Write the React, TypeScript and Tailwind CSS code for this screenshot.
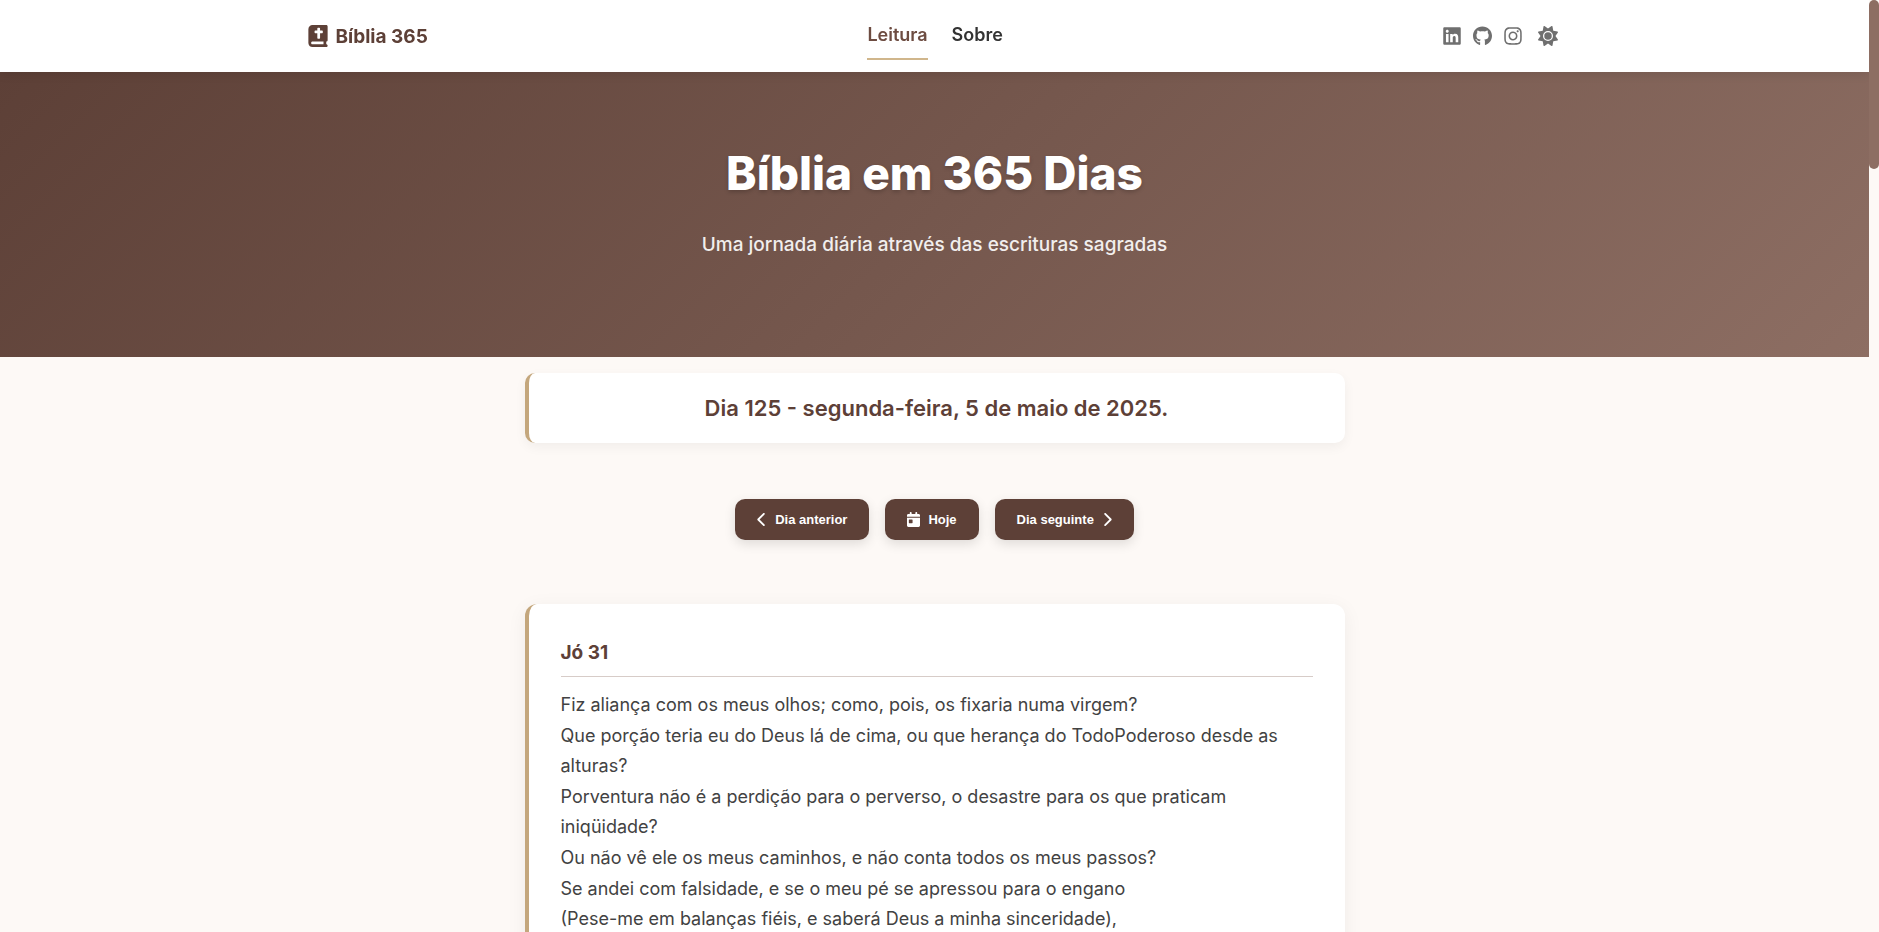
import { FaBookBible, FaCalendarDay, FaChevronLeft, FaChevronRight, FaGithub, FaInstagram, FaLinkedin, FaSun } from "react-icons/fa6";

const verses = [
  "Fiz aliança com os meus olhos; como, pois, os fixaria numa virgem?",
  "Que porção teria eu do Deus lá de cima, ou que herança do TodoPoderoso desde as alturas?",
  "Porventura não é a perdição para o perverso, o desastre para os que praticam iniqüidade?",
  "Ou não vê ele os meus caminhos, e não conta todos os meus passos?",
  "Se andei com falsidade, e se o meu pé se apressou para o engano",
  "(Pese-me em balanças fiéis, e saberá Deus a minha sinceridade),",
];

const dayButton =
  "flex h-[41px] cursor-pointer items-center gap-2 rounded-[10px] bg-[#5d4037] px-[22px] font-['Liberation_Sans',Arial,sans-serif] text-[13px] font-bold text-white shadow-[0_4px_12px_rgba(0,0,0,0.12)]";

function Header() {
  return (
    <header className="sticky top-0 z-10 bg-white shadow-[0_2px_10px_rgba(0,0,0,0.1)]">
      <div className="mx-auto flex h-[72px] max-w-[1302px] items-center justify-between px-6">
        <a href="#inicio" className="flex items-center gap-2 text-[19px] leading-8 font-bold text-[#5d4037]">
          <FaBookBible className="h-[22px] w-5" />
          <span className="pt-0.5">Bíblia 365</span>
        </a>
        <nav className="flex gap-6 text-[18px] leading-[26px] font-semibold">
          <a href="#leitura" className="border-b-2 border-[#d0b68c] py-2.5 text-[#6d4c41]">
            Leitura
          </a>
          <a href="#sobre" className="border-b-2 border-transparent py-2.5 text-[#333333]">
            Sobre
          </a>
        </nav>
        <div className="flex items-center gap-3 pr-1 text-[#6f6f6f]">
          <a href="#linkedin" aria-label="LinkedIn"><FaLinkedin className="h-5 w-[18px]" /></a>
          <a href="#github" aria-label="GitHub"><FaGithub className="h-5 w-[19px]" /></a>
          <a href="#instagram" aria-label="Instagram"><FaInstagram className="h-5 w-[18px]" /></a>
          <button type="button" aria-label="Alternar tema" className="ml-1 cursor-pointer"><FaSun className="h-5 w-5" /></button>
        </div>
      </div>
    </header>
  );
}

export default function App() {
  return (
    <div className="flex h-screen bg-[#fdf9f6] font-[Inter,sans-serif]">
      <div className="min-w-0 flex-1 overflow-y-auto [scrollbar-width:none]">
        <Header />
        <section className="bg-linear-[135deg] from-[#5d4037] to-[#8d6e63] px-6 pt-16 pb-24 text-center text-white">
          <h1 className="text-[46px] leading-[74px] font-extrabold [text-shadow:0_2px_4px_rgba(0,0,0,0.2)]">
            Bíblia em 365 Dias
          </h1>
          <p className="mt-[18px] text-[19px] leading-[33px] font-medium opacity-90">Uma jornada diária através das escrituras sagradas</p>
        </section>
        <main className="mx-auto max-w-[820px] pt-4 pb-16">
          <h2 className="rounded-[10px] border-l-4 border-[#c4a77d] bg-white py-4 text-center text-[22px] leading-[38px] font-semibold text-[#5d4037] shadow-[0_4px_12px_rgba(0,0,0,0.05)]">
            Dia 125 - segunda-feira, 5 de maio de 2025.
          </h2>
          <div className="mt-14 flex flex-wrap justify-center gap-4">
            <button type="button" className={dayButton}>
              <FaChevronLeft className="h-[15px] w-2.5" />
              Dia anterior
            </button>
            <button type="button" className={dayButton}>
              <FaCalendarDay className="h-[15px] w-[13px]" />
              Hoje
            </button>
            <button type="button" className={dayButton}>
              Dia seguinte
              <FaChevronRight className="h-[15px] w-2.5" />
            </button>
          </div>
          <article className="mt-16 rounded-xl border-l-4 border-[#c4a77d] bg-white p-8 shadow-[0_4px_20px_rgba(0,0,0,0.06)]">
            <h3 className="border-b border-[#d7ccc8] pb-[7px] text-[19px] leading-[33px] font-bold text-[#5d4037]">Jó 31</h3>
            <div className="mt-[13px] text-[18px] leading-[1.7] text-[#424242]">
              {verses.map((verse) => (
                <p key={verse}>{verse}</p>
              ))}
            </div>
          </article>
        </main>
      </div>
      <div aria-hidden="true" className="w-2.5 shrink-0">
        <div className="h-[169px] rounded-full bg-[#8d6e63]" />
      </div>
    </div>
  );
}
